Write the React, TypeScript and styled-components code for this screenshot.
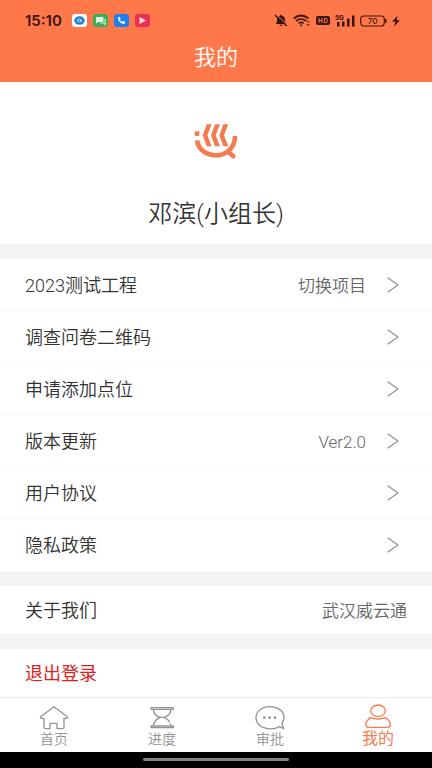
import React from "react";
import styled, { createGlobalStyle } from "styled-components";

const GlobalStyle = createGlobalStyle`
  *, *::before, *::after { box-sizing: border-box; }
  body {
    margin: 0;
    background: #fff;
    font-family: Roboto, "Noto Sans CJK SC", sans-serif;
    font-weight: 350;
  }
  button { font: inherit; border: 0; background: none; padding: 0; cursor: pointer; }
  svg { display: block; flex: none; }
`;

const Page = styled.div`
  min-height: 100vh;
  display: flex;
  flex-direction: column;
  background: #fff;
`;

const Header = styled.header`
  background: #ff784a;
  padding: 12px 0 10px;
`;

const StatusBar = styled.div`
  display: flex;
  justify-content: space-between;
  align-items: center;
  height: 17px;
  padding: 0 32px 0 25px;
`;

const StatusGroup = styled.div<{ $gap: number }>`
  display: flex;
  align-items: center;
  gap: ${(p) => p.$gap}px;
`;

const Clock = styled.time`
  width: 41px;
  font: 600 15px/17px Inter, sans-serif;
  color: #3a150b;
`;

const Title = styled.h1`
  margin: 15px 0 0;
  font-size: 22px;
  font-weight: 350;
  line-height: 28px;
  color: #fff;
  text-align: center;
`;

const Content = styled.main`
  flex: 1;
  display: flex;
  flex-direction: column;
  gap: 15px;
  background: #f3f3f3;
`;

const Profile = styled.section`
  display: flex;
  flex-direction: column;
  align-items: center;
  gap: 37px;
  padding: 41px 0 13px;
  background: #fff;
`;

const Name = styled.h2`
  margin: 0;
  font-size: 24px;
  font-weight: 350;
  line-height: 34px;
  color: #333;
`;

const Section = styled.section`
  background: #fff;
  &:last-child { flex: 1; }
`;

const Row = styled.button<{ $compact?: boolean; $danger?: boolean }>`
  display: flex;
  align-items: center;
  width: 100%;
  height: ${(p) => (p.$compact ? 48 : 52)}px;
  padding: 0 25px;
  font-size: 18px;
  font-weight: ${(p) => (p.$danger ? 400 : 350)};
  line-height: 28px;
  color: ${(p) => (p.$danger ? "#dc1e1e" : "#333")};
  text-align: left;
  & + & { box-shadow: inset 0 1px #f8f8f8; }
`;

const Label = styled.span`
  flex: 1;
  padding-top: 2px;
`;

const Value = styled.span`
  padding-top: 2px;
  font-size: 17px;
  color: #666;
`;

const ChevronBox = styled.span`
  padding: 0 8px 0 21px;
`;

const TabBar = styled.nav`
  display: grid;
  grid-template-columns: repeat(4, 1fr);
  border-top: 1px solid #ebebeb;
  background: #fff;
`;

const Tab = styled.button<{ $active?: boolean }>`
  display: flex;
  flex-direction: column;
  align-items: center;
  height: 54px;
  padding-top: ${(p) => (p.$active ? 4 : 6)}px;
  font-size: ${(p) => (p.$active ? 16 : 14)}px;
  font-weight: ${(p) => (p.$active ? 400 : 350)};
  line-height: ${(p) => (p.$active ? 20 : 16)}px;
  color: ${(p) => (p.$active ? "#f47b50" : "#949494")};
`;

const GestureBar = styled.footer`
  display: flex;
  justify-content: center;
  padding: 6px 0 7px;
  background: #000;
`;

const GestureHandle = styled.div`
  width: 34%;
  height: 3px;
  border-radius: 2px;
  background: #858585;
`;

const dark = "#3a150b";

const AppIcons = () => (
  <StatusGroup $gap={6}>
    <svg width="15" height="13" viewBox="0 0 15 13">
      <rect width="15" height="13" rx="3" fill="#fff" />
      <ellipse cx="7.5" cy="6.5" rx="5.3" ry="4.2" fill="#2485d6" />
      <ellipse cx="7.5" cy="6.5" rx="2.2" ry="1.8" fill="#d9f1fd" />
      <circle cx="7.5" cy="6.5" r=".9" fill="#15579c" />
    </svg>
    <svg width="15" height="13" viewBox="0 0 15 13">
      <rect width="15" height="13" rx="3" fill="#38ae57" />
      <path d="M3.5 3h6q1 0 1 1v3q0 1-1 1h-4L3 9.500V4q0-1 .5-1z" fill="#e4f8e6" />
      <path d="M11.300 5q1 0 1 1v4.500L10.500 9H7" fill="none" stroke="#c1edc8" strokeWidth="1.200" />
    </svg>
    <svg width="15" height="13" viewBox="0 0 15 13">
      <rect width="15" height="13" rx="3" fill="#1b80ee" />
      <path d="M4 3.300l1.400-.5 1.300 2-.8.900c.6 1.100 1.300 1.600 2.300 2.100l1-.8 2.100 1.100-.4 1.500c-3 1.300-7.500-2.600-6.900-6.300z" fill="#fff" />
    </svg>
    <svg width="15" height="13" viewBox="0 0 15 13">
      <rect width="15" height="13" rx="3" fill="#e82f56" />
      <path d="M4.500 3l6.700 3.500-6.700 3.500z" fill="#ffd5dc" />
    </svg>
  </StatusGroup>
);

const SystemIcons = () => (
  <StatusGroup $gap={5}>
    <svg width="14" height="13" viewBox="0 0 14 13" fill={dark}>
      <path d="M1.500 10c1-.9 1.500-2 1.500-4C3 3.500 4.500 2 6.300 1.700V.8h1.400v.9C9.600 2 11 3.500 11 6s.5 3.100 1.500 4zM5.400 10.700h3.200Q8.400 12 7 12t-1.600-1.300z" />
      <path d="M2 .3l11.500 10.600" stroke="#ff784a" strokeWidth="1" />
      <path d="M.8 1.100l12 11" stroke={dark} strokeWidth="1.300" />
    </svg>
    <svg width="18" height="13" viewBox="0 0 18 13" fill="none" stroke={dark} strokeWidth="1.700">
      <path d="M.8 4.500Q8-1.500 15.500 4.500M3 7q5-4 10.200 0M5.500 9.300q2.700-2 5.200 0" />
      <circle cx="8.200" cy="11.300" r="1" fill={dark} stroke="none" />
      <path d="M13.500 8.300l1.700-1.600L17 8.300zM13.500 10.200l1.700 1.600 1.800-1.600z" fill={dark} stroke="none" />
    </svg>
    <svg width="14" height="11" viewBox="0 0 14 11">
      <rect y="1" width="14" height="9" rx="2" fill={dark} />
      <path d="M3 3v5M6 3v5M3 5.500h3M8.300 3.400H10q1.300 0 1.300 2.100T10 7.600H8.300z" fill="none" stroke="#ff784a" strokeWidth="1" />
    </svg>
    <svg width="20" height="13" viewBox="0 0 20 13">
      <text x="0" y="6" fontFamily="Roboto, sans-serif" fontSize="7" fontWeight="700" fill={dark}>5G</text>
      <path d="M2 8h2.500v4.500H2zM7 7.500h2.500v5H7zM12 4.500h2.500v8H12zM17 1.500h2.500v11H17z" fill={dark} />
    </svg>
    <svg width="27" height="12" viewBox="0 0 27 12">
      <rect x=".7" y="1" width="23.600" height="10" rx="3" fill="none" stroke={dark} strokeWidth="1.100" />
      <path d="M25.800 4v4" stroke={dark} strokeWidth="1.400" />
      <text x="12.500" y="9" textAnchor="middle" fontFamily="Inter, sans-serif" fontSize="8" fontWeight="500" fill={dark}>70</text>
    </svg>
    <svg width="8" height="12" viewBox="0 0 8 12">
      <path d="M5.500.8L0 6.600h3.300L2.300 11.300 8 5.200H4.700z" fill={dark} />
    </svg>
  </StatusGroup>
);

const Logo = () => (
  <svg width="46" height="37" viewBox="158 40 138 111" fill="#f47b50" role="img" aria-label="logo">
    <rect x="163" y="65" width="14" height="14" rx="2" />
    <path d="M199 44h15l-13 33 13 33h-15L187 77z" />
    <path d="M224 44h15l-13 33 13 33h-15L212 77z" />
    <path d="M249 44h15l-13 33 13 33h-15L237 77z" />
    <path d="M170 92C175 121 198 137 228 137C260 137 284 113 284 79" fill="none" stroke="#f47b50" strokeWidth="14" />
    <path d="M264 127l15 13" fill="none" stroke="#f47b50" strokeWidth="14" strokeLinecap="round" />
  </svg>
);

const Chevron = () => (
  <ChevronBox>
    <svg width="12" height="16" viewBox="0 0 12 16" fill="none" stroke="#929292" strokeWidth="1.300">
      <path d="M.7.7L11 8 .7 15.300" />
    </svg>
  </ChevronBox>
);

const TabIcon = ({ viewBox, children }: { viewBox: string; children: React.ReactNode }) => (
  <svg width="30" height="27" viewBox={viewBox} fill="none" stroke="currentColor" strokeWidth="4" strokeLinejoin="round" strokeLinecap="round">
    {children}
  </svg>
);

const tabs = [
  {
    label: "首页",
    icon: (
      <TabIcon viewBox="57 27 90 81">
        <path d="M102 35L62 65q-2 5 3 5h7v26q0 5 5 5h13V87q0-2 2-2h17q2 0 2 2v14h16q5 0 5-5V70h8q5-1 2-5z" />
      </TabIcon>
    ),
  },
  {
    label: "进度",
    icon: (
      <TabIcon viewBox="380 27 90 81">
        <path d="M392 38h67v5h-67zM392 93h67v5h-67z" />
        <path d="M399 44c2 16 11 20 20 23-9 4-18 11-20 25M452 44c-2 16-11 20-20 23 7 3 12 7 15 13M419 67h13M450 87l2 5" />
      </TabIcon>
    ),
  },
  {
    label: "审批",
    icon: (
      <TabIcon viewBox="45 27 90 81">
        <path d="M119 95C108 101 89 104 72 98C55 92 48 80 48 68C48 48 67 35 90 35S132 48 132 67Q132 77 126 84L131 101Z" />
        <g fill="currentColor" stroke="none">
          <circle cx="73" cy="68" r="4" />
          <circle cx="89" cy="68" r="4" />
          <circle cx="105" cy="68" r="4" />
        </g>
      </TabIcon>
    ),
  },
  {
    label: "我的",
    active: true,
    icon: (
      <TabIcon viewBox="369 19 90 81">
        <ellipse cx="414" cy="45" rx="22" ry="17" />
        <path d="M392 66C382 72 378 79 378 88q0 7 8 7h56q9 0 9-7C451 79 446 72 436 66q-9 4-22 4t-22-4z" />
      </TabIcon>
    ),
  },
];

const menu = [
  { label: "2023测试工程", value: "切换项目" },
  { label: "调查问卷二维码" },
  { label: "申请添加点位" },
  { label: "版本更新", value: "Ver2.0" },
  { label: "用户协议" },
  { label: "隐私政策" },
];

export default function App() {
  return (
    <Page lang="zh-CN">
      <GlobalStyle />
      <Header>
        <StatusBar>
          <StatusGroup $gap={6}>
            <Clock>15:10</Clock>
            <AppIcons />
          </StatusGroup>
          <SystemIcons />
        </StatusBar>
        <Title>我的</Title>
      </Header>
      <Content>
        <Profile>
          <Logo />
          <Name>邓滨(小组长)</Name>
        </Profile>
        <Section>
          {menu.map((item) => (
            <Row key={item.label}>
              <Label>{item.label}</Label>
              {item.value && <Value>{item.value}</Value>}
              <Chevron />
            </Row>
          ))}
        </Section>
        <Section>
          <Row $compact>
            <Label>关于我们</Label>
            <Value>武汉威云通</Value>
          </Row>
        </Section>
        <Section>
          <Row $compact $danger>
            <Label>退出登录</Label>
          </Row>
        </Section>
      </Content>
      <TabBar>
        {tabs.map((tab) => (
          <Tab key={tab.label} $active={tab.active} aria-current={tab.active ? "page" : undefined}>
            {tab.icon}
            {tab.label}
          </Tab>
        ))}
      </TabBar>
      <GestureBar>
        <GestureHandle />
      </GestureBar>
    </Page>
  );
}
